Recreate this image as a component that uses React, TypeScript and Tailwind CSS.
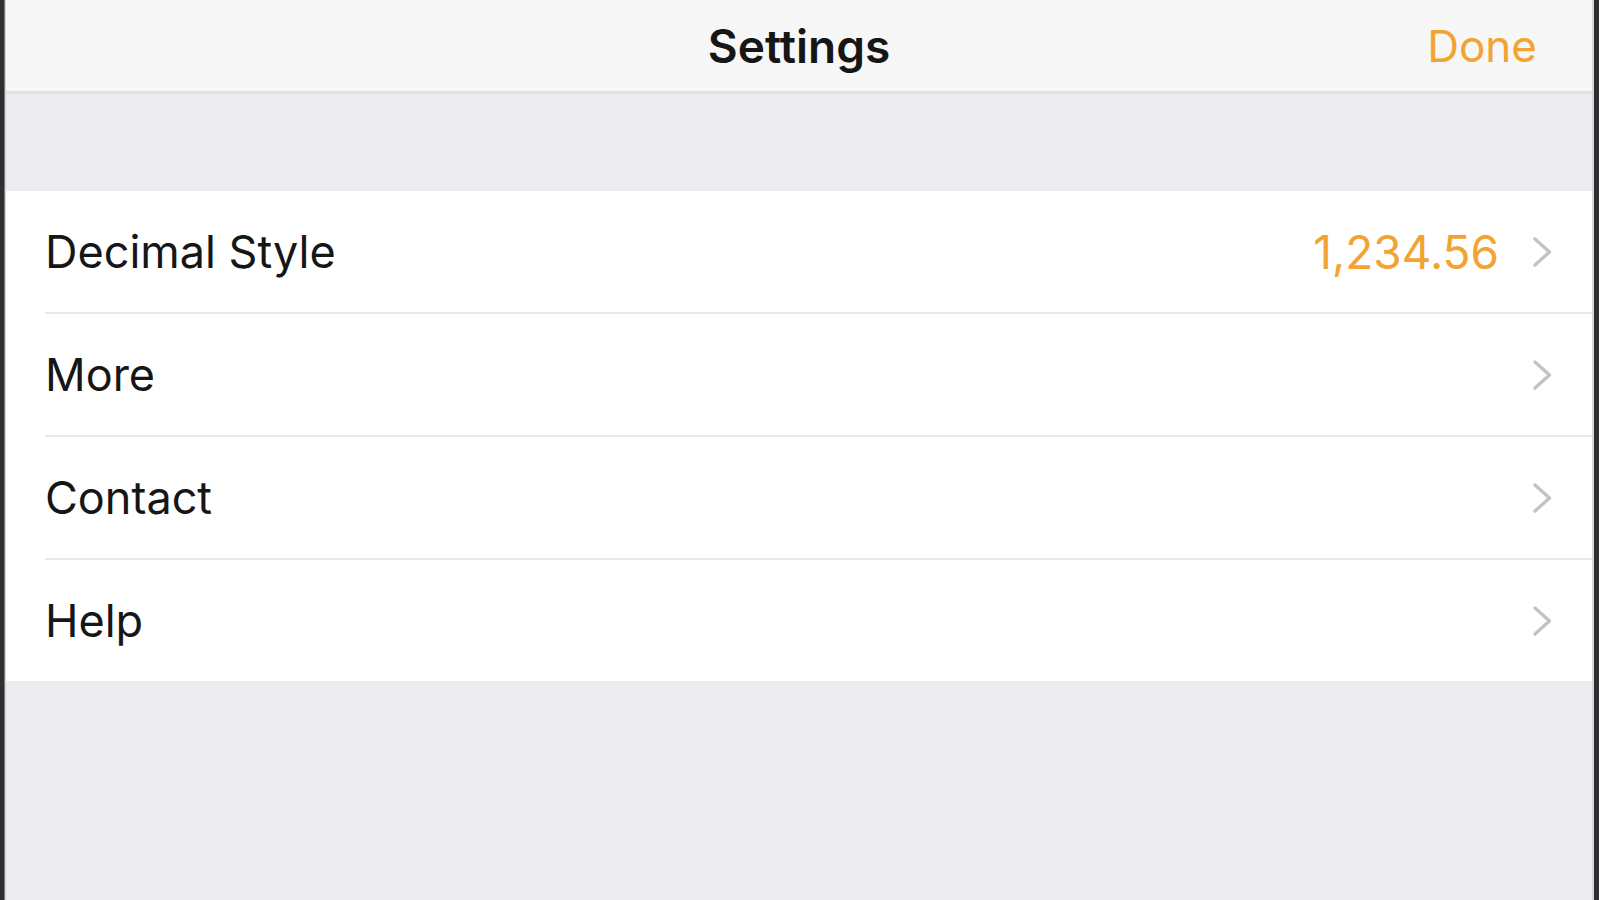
import React from "react";

const Chevron = () => (
  <svg width="21" height="32" viewBox="0 0 21 32" className="shrink-0">
    <polyline points="3,3 17.5,16 3,29" fill="none" stroke="#c2c2c7" strokeWidth="3.4" strokeLinecap="round" strokeLinejoin="round" />
  </svg>
);

const Row = ({ label, value }: { label: string; value?: string }) => (
  <div className="flex h-[121px] items-center pl-[39px] pr-[39px]">
    <span className="flex-1 text-[45px] leading-none text-[#161616]">{label}</span>
    {value && <span className="mr-[33px] text-[46px] leading-none text-[#f2a331]">{value}</span>}
    <Chevron />
  </div>
);

const Sep = () => <div className="ml-[39px] h-[2px] bg-[#e9e9eb]" />;

export default function App() {
  return (
    <div
      className="flex h-[900px] w-full overflow-hidden bg-white"
      style={{ fontFamily: "Inter, 'Liberation Sans', sans-serif" }}
    >
      <div className="flex shrink-0">
        <div className="w-[4px] bg-[#2f2f32]" />
        <div className="w-[1px] bg-[#7d7d80]" />
        <div className="w-[1px] bg-[#d4d4d6]" />
      </div>
      <div className="flex min-w-0 flex-1 flex-col">
        <div className="grid h-[94px] shrink-0 grid-cols-[1fr_auto_1fr] items-center border-b-[3px] border-[#e2e2e5] bg-[#f7f7f7]">
          <div />
          <div className="text-[46px] font-semibold leading-none text-[#161616]">Settings</div>
          <div className="flex justify-end pr-[55px]">
            <span className="text-[44px] leading-none text-[#f2a331]">Done</span>
          </div>
        </div>
        <div className="h-[97px] shrink-0 bg-[#ebebf0]" />
        <div className="shrink-0 bg-white">
          <Row label="Decimal Style" value="1,234.56" />
          <Sep />
          <Row label="More" />
          <Sep />
          <Row label="Contact" />
          <Sep />
          <Row label="Help" />
        </div>
        <div className="flex-1 bg-[#ebebf0]" />
      </div>
      <div className="flex shrink-0">
        <div className="w-[2px] bg-[#d6d6d9]" />
        <div className="w-[5px] bg-[#2f2f32]" />
      </div>
    </div>
  );
}
